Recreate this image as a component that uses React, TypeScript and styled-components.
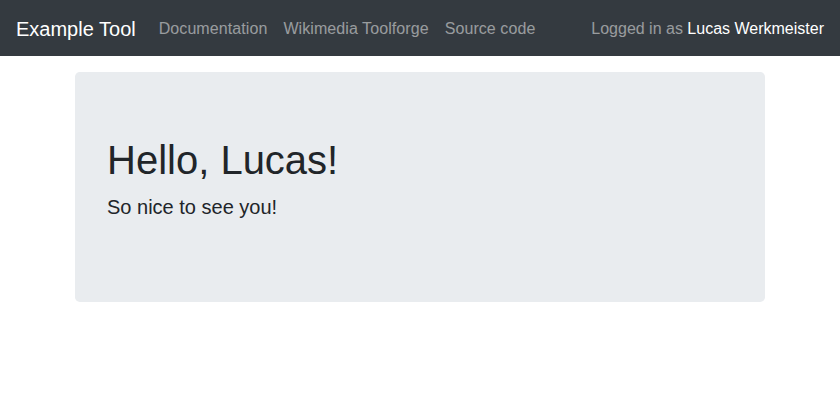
import React from "react";
import styled, { createGlobalStyle } from "styled-components";

const Global = createGlobalStyle`
  html, body { margin: 0; padding: 0; }
  body {
    font-family: "Liberation Sans", Arial, Helvetica, sans-serif;
    font-size: 16px;
    line-height: 1.5;
    color: #212529;
    background: #fff;
  }
  * { box-sizing: border-box; }
`;

const Navbar = styled.nav`
  display: flex;
  align-items: center;
  justify-content: space-between;
  background: #343a40;
  padding: 9px 16px 7px;
  height: 56px;
`;

const Left = styled.div`
  display: flex;
  align-items: center;
`;

const Brand = styled.a`
  color: #fff;
  font-size: 20px;
  line-height: 30px;
  padding: 5px 0;
  margin-right: 15px;
  text-decoration: none;
  white-space: nowrap;
`;

const NavLinks = styled.ul`
  display: flex;
  list-style: none;
  margin: 0;
  padding: 0;
`;

const NavLink = styled.a`
  display: block;
  padding: 8px;
  color: rgba(255, 255, 255, 0.5);
  text-decoration: none;
  letter-spacing: 0.08px;
`;

const NavText = styled.span`
  padding: 8px 0;
  color: rgba(255, 255, 255, 0.5);
`;

const User = styled.a`
  color: #fff;
  text-decoration: none;
`;

const Container = styled.main`
  width: 720px;
  margin: 0 auto;
  padding: 16px 15px 0;
`;

const Jumbotron = styled.section`
  background: #e9ecef;
  border-radius: 4.8px;
  padding: 64px 32px;
  margin-bottom: 32px;
`;

const Title = styled.h1`
  font-size: 40px;
  font-weight: 500;
  line-height: 1.2;
  margin: 0 0 8px;
`;

const Lead = styled.p`
  font-size: 20px;
  font-weight: 300;
  margin: 0 0 16px;
`;

export default function App() {
  return (
    <>
      <Global />
      <Navbar>
        <Left>
          <Brand href="#">Example Tool</Brand>
          <NavLinks>
            <li><NavLink href="#">Documentation</NavLink></li>
            <li><NavLink href="#">Wikimedia Toolforge</NavLink></li>
            <li><NavLink href="#">Source code</NavLink></li>
          </NavLinks>
        </Left>
        <NavText>
          Logged in as <User href="#">Lucas Werkmeister</User>
        </NavText>
      </Navbar>
      <Container>
        <Jumbotron>
          <Title>Hello, Lucas!</Title>
          <Lead>So nice to see you!</Lead>
        </Jumbotron>
      </Container>
    </>
  );
}
